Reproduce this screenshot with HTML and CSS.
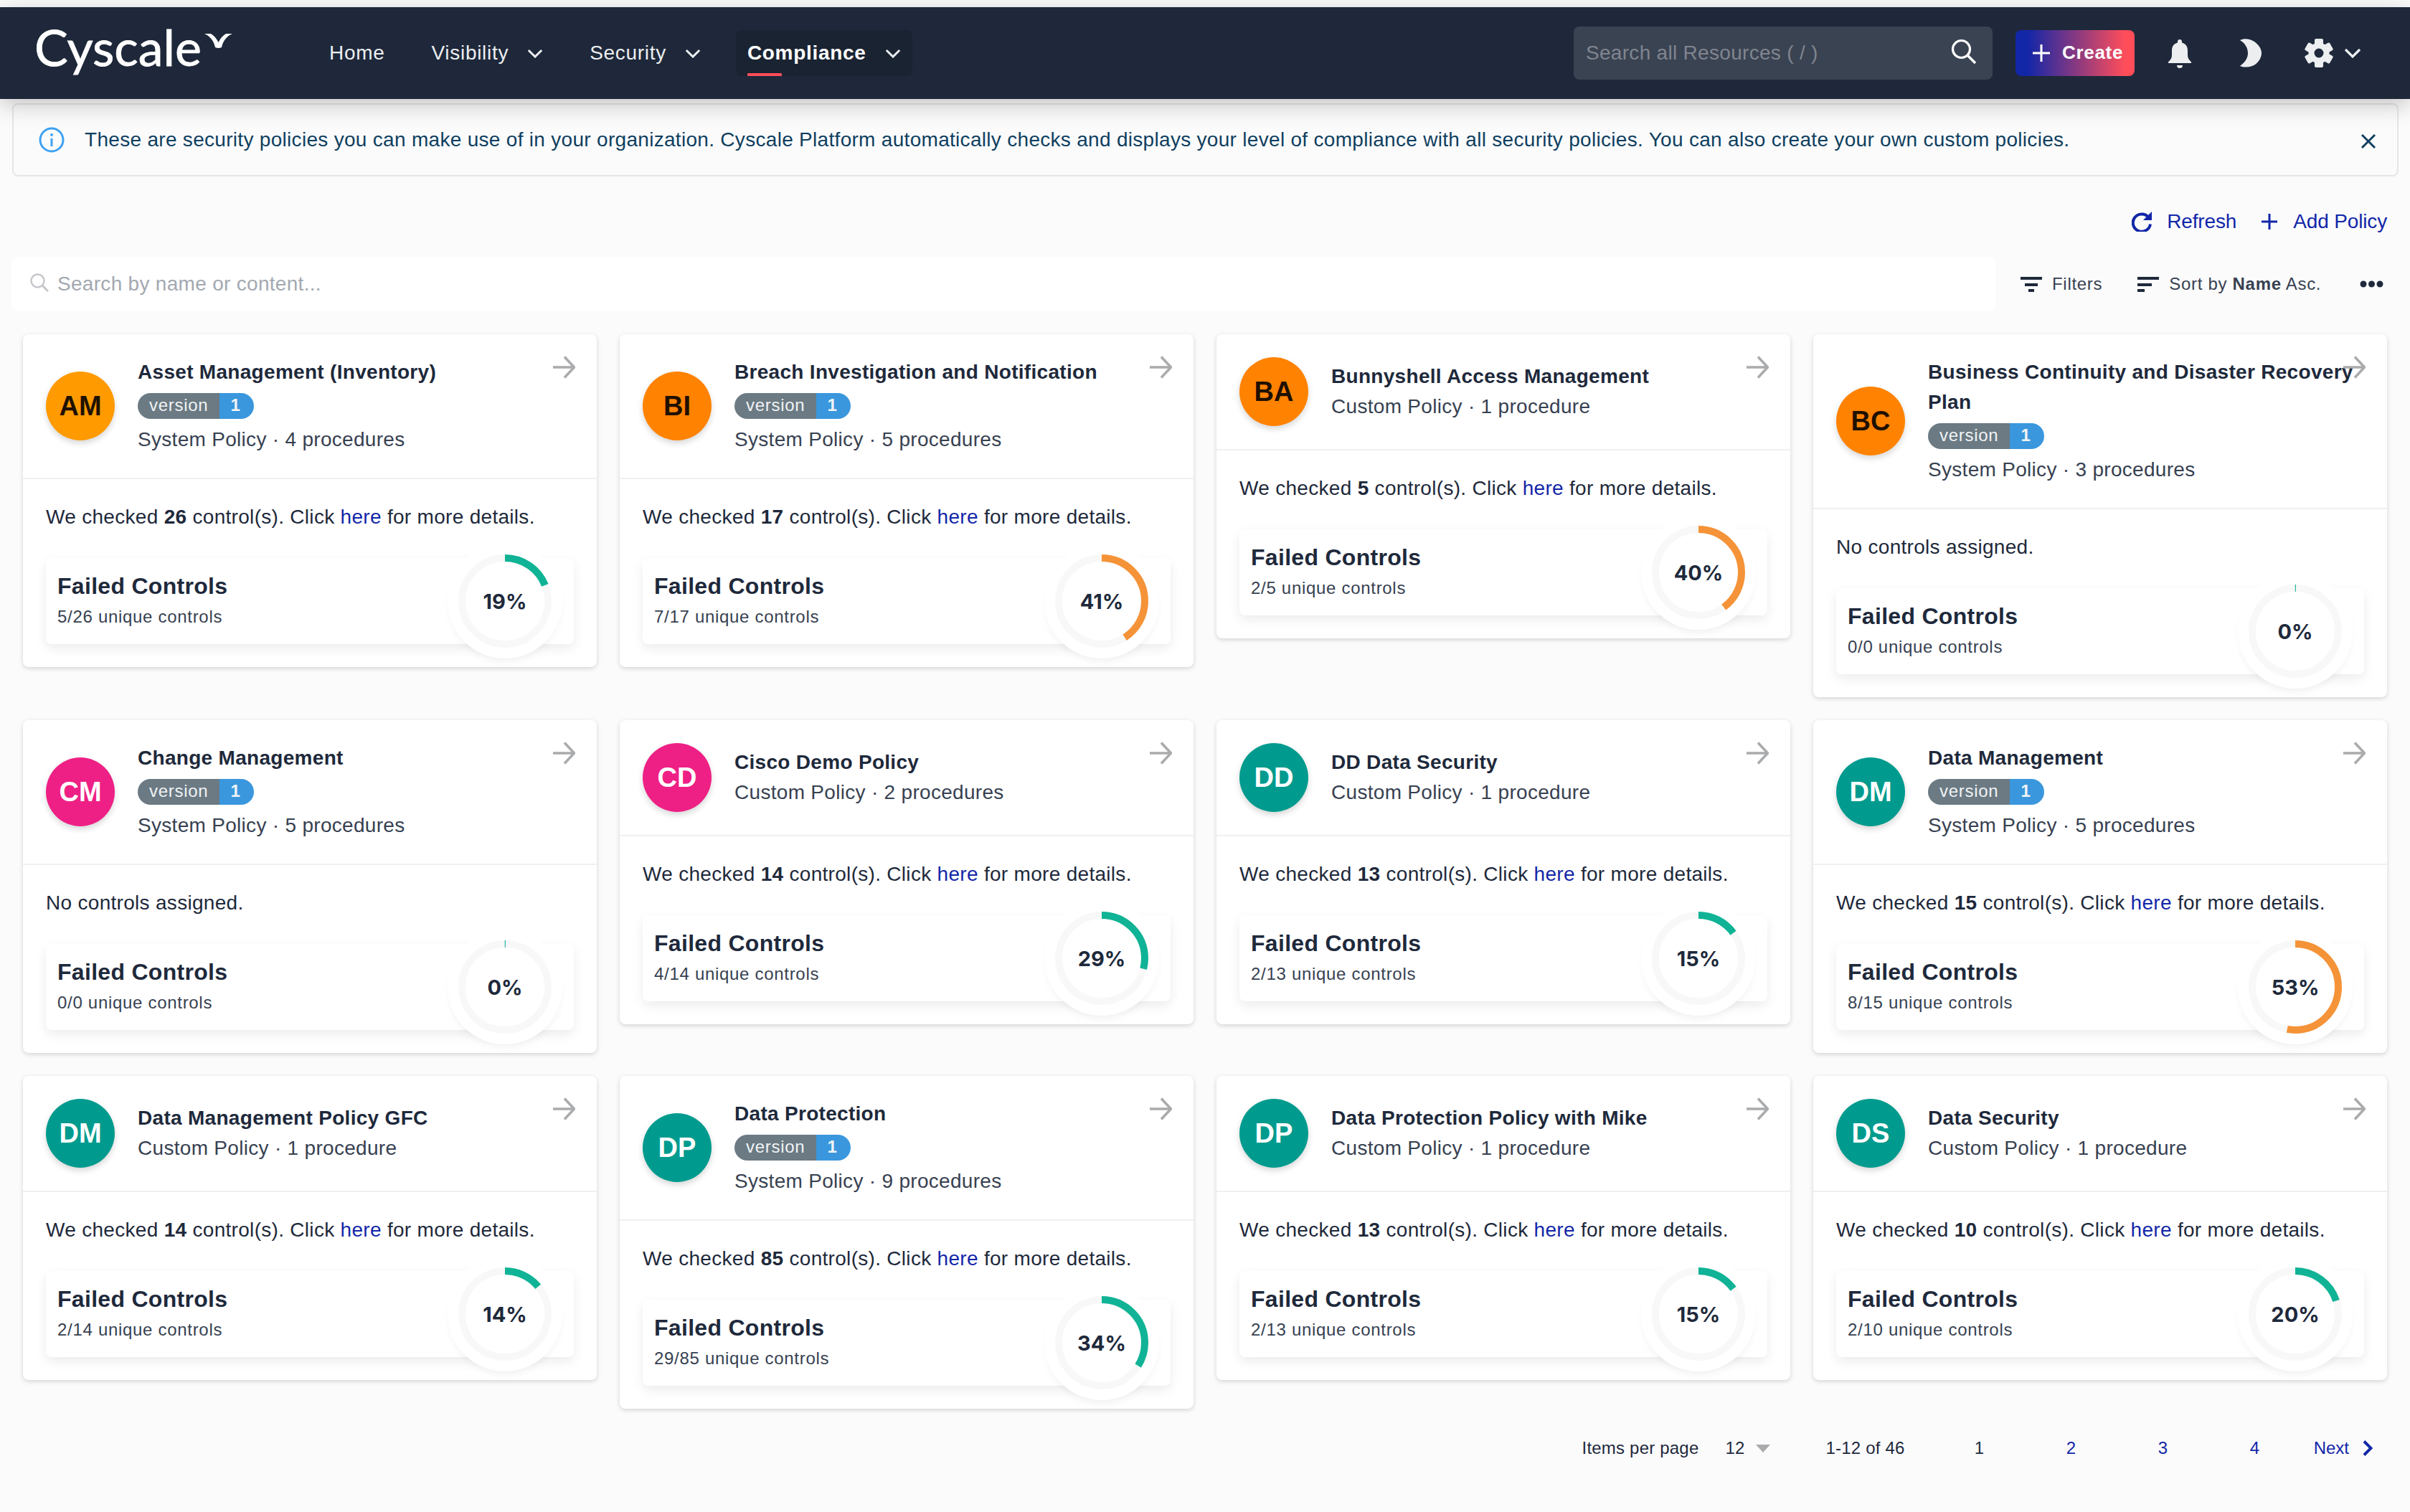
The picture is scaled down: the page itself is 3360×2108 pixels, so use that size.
FILE: index.html
```html
<!DOCTYPE html>
<html lang="en">
<head>
<meta charset="utf-8">
<title>Cyscale - Policies</title>
<link rel="stylesheet" href="styles.css">
</head>
<body>
<svg class="defs" width="0" height="0" aria-hidden="true">
  <symbol id="arrow" viewBox="0 0 32 32"><path d="M1 16H30M17 1.500L30.500 16L17 30.500" fill="none" stroke="currentColor" stroke-width="3.600"/></symbol>
  <symbol id="chev" viewBox="0 0 24 14"><path d="M2 2L12 12L22 2" fill="none" stroke="currentColor" stroke-width="3.200"/></symbol>
</svg>
<header class="nav">
  <div class="logo"><span class="logo-text">Cyscale</span><svg class="logo-mark" viewBox="0 0 39 20"><path d="M0 0H9C14 3 17 7 19.500 12C22 7 25 3 30 0H39C32 3 26 9 24 19Q19.500 21 15 19C13 9 7 3 0 0Z" fill="#fff"/></svg></div>
  <nav class="menu">
    <a class="menu-item">Home</a>
    <a class="menu-item">Visibility<svg class="menu-chev"><use href="#chev"/></svg></a>
    <a class="menu-item">Security<svg class="menu-chev"><use href="#chev"/></svg></a>
    <a class="menu-item active">Compliance<svg class="menu-chev"><use href="#chev"/></svg><i class="underline"></i></a>
  </nav>
  <div class="nav-right">
    <div class="global-search"><span>Search all Resources ( / )</span><svg class="gs-icon" viewBox="0 0 36 36"><circle cx="14.500" cy="14.500" r="12" fill="none" stroke="#fff" stroke-width="3.200"/><path d="M23 23L34 34" stroke="#fff" stroke-width="3.600"/></svg></div>
    <a class="create"><svg class="create-plus" viewBox="0 0 24 24"><path d="M12 0V24M0 12H24" stroke="#fff" stroke-width="3"/></svg>Create</a>
    <svg class="bell" viewBox="0 0 32 40"><path d="M16 0a3 3 0 0 1 3 3v1.500c6 1.500 8 6 8 11.500v6c0 4 2 6.500 5 9.500v1.500H0v-1.500c3-3 5-5.500 5-9.500v-6c0-5.500 2-10 8-11.500V3a3 3 0 0 1 3-3zM12 36h8a4 4 0 0 1-8 0z" fill="#eceef0"/></svg>
    <svg class="moon" viewBox="0 0 30 40"><path d="M0 2C6-1 14 0 20 4C27 9 30 15 30 20C30 27 25 35 17 38C11 40 5 40 0 38C7 33 11 27 11 20C11 13 7 6 0 2Z" fill="#eceef0"/></svg>
    <svg class="gear" viewBox="0 0 40 40"><g fill="#eceef0"><rect x="14" y="0" width="12" height="9" rx="2"/><rect x="14" y="0" width="12" height="9" rx="2" transform="rotate(60 20 20)"/><rect x="14" y="0" width="12" height="9" rx="2" transform="rotate(120 20 20)"/><rect x="14" y="0" width="12" height="9" rx="2" transform="rotate(180 20 20)"/><rect x="14" y="0" width="12" height="9" rx="2" transform="rotate(240 20 20)"/><rect x="14" y="0" width="12" height="9" rx="2" transform="rotate(300 20 20)"/></g><circle cx="20" cy="20" r="10.500" fill="none" stroke="#eceef0" stroke-width="8"/></svg>
    <svg class="gear-chev"><use href="#chev"/></svg>
  </div>
</header>

<div class="alert">
  <svg class="alert-icon" viewBox="0 0 36 36"><circle cx="18" cy="18" r="16" fill="none" stroke="#3fa2f2" stroke-width="3"/><circle cx="18" cy="11" r="2" fill="#3fa2f2"/><path d="M18 16V27" stroke="#3fa2f2" stroke-width="3"/></svg>
  <p class="alert-text">These are security policies you can make use of in your organization. Cyscale Platform automatically checks and displays your level of compliance with all security policies. You can also create your own custom policies.</p>
  <svg class="alert-close" viewBox="0 0 22 22"><path d="M2 2L20 20M20 2L2 20" stroke="#0f3f5f" stroke-width="3"/></svg>
</div>

<main class="main">
  <div class="actions">
    <a class="action"><svg class="action-icon" viewBox="0 0 28 28"><path d="M23.500 8A12.200 12.200 0 1 0 26 17.500" fill="none" stroke="#1226a8" stroke-width="4"/><path d="M28 0V12H16Z" fill="#1226a8"/></svg>Refresh</a>
    <a class="action"><svg class="action-icon plus" viewBox="0 0 24 24"><path d="M12 1V23M1 12H23" stroke="#1226a8" stroke-width="3"/></svg>Add Policy</a>
  </div>

  <div class="toolbar">
    <div class="search"><svg class="search-icon" viewBox="0 0 26 26"><circle cx="10.500" cy="10.500" r="9" fill="none" stroke="#c4c6ca" stroke-width="2.400"/><path d="M17 17L25 25" stroke="#c4c6ca" stroke-width="3"/></svg><span>Search by name or content...</span></div>
    <a class="tool filters"><svg class="tool-icon" viewBox="0 0 30 21"><path d="M0 0H30V4H0ZM6 9H24V13H6ZM11 17H19V21H11Z" fill="#1e293b"/></svg>Filters</a>
    <a class="tool sort"><svg class="tool-icon" viewBox="0 0 30 21"><path d="M0 0H30V4H0ZM0 9H20V13H0ZM0 17H10V21H0Z" fill="#1e293b"/></svg><span>Sort by <b>Name</b> Asc.</span></a>
    <svg class="more" viewBox="0 0 33 10"><circle cx="5" cy="5" r="4.500" fill="#1e293b"/><circle cx="16.500" cy="5" r="4.500" fill="#1e293b"/><circle cx="28" cy="5" r="4.500" fill="#1e293b"/></svg>
  </div>

  <section class="grid">

    <article class="card">
      <svg class="card-arrow"><use href="#arrow"/></svg>
      <div class="card-head">
        <div class="avatar amber">AM</div>
        <div class="head-text">
          <h3 class="title">Asset Management (Inventory)</h3>
          <div class="badge"><span class="badge-l">version</span><span class="badge-r">1</span></div>
          <div class="sub">System Policy · 4 procedures</div>
        </div>
      </div>
      <div class="card-body">
        <p class="checked">We checked <b>26</b> control(s). Click <a>here</a> for more details.</p>
        <div class="box">
          <div class="box-title">Failed Controls</div>
          <div class="box-sub">5/26 unique controls</div>
          <div class="ring"><svg class="ring-svg" viewBox="0 0 160 160"><circle class="track" cx="80" cy="80" r="60"/><circle class="val teal" cx="80" cy="80" r="60" pathLength="100" stroke-dasharray="19 100" transform="rotate(-90 80 80)"/></svg><span class="pct">19%</span></div>
        </div>
      </div>
    </article>

    <article class="card">
      <svg class="card-arrow"><use href="#arrow"/></svg>
      <div class="card-head">
        <div class="avatar orange">BI</div>
        <div class="head-text">
          <h3 class="title">Breach Investigation and Notification</h3>
          <div class="badge"><span class="badge-l">version</span><span class="badge-r">1</span></div>
          <div class="sub">System Policy · 5 procedures</div>
        </div>
      </div>
      <div class="card-body">
        <p class="checked">We checked <b>17</b> control(s). Click <a>here</a> for more details.</p>
        <div class="box">
          <div class="box-title">Failed Controls</div>
          <div class="box-sub">7/17 unique controls</div>
          <div class="ring"><svg class="ring-svg" viewBox="0 0 160 160"><circle class="track" cx="80" cy="80" r="60"/><circle class="val warn" cx="80" cy="80" r="60" pathLength="100" stroke-dasharray="41 100" transform="rotate(-90 80 80)"/></svg><span class="pct">41%</span></div>
        </div>
      </div>
    </article>

    <article class="card">
      <svg class="card-arrow"><use href="#arrow"/></svg>
      <div class="card-head">
        <div class="avatar orange">BA</div>
        <div class="head-text">
          <h3 class="title">Bunnyshell Access Management</h3>
          <div class="sub flat">Custom Policy · 1 procedure</div>
        </div>
      </div>
      <div class="card-body">
        <p class="checked">We checked <b>5</b> control(s). Click <a>here</a> for more details.</p>
        <div class="box">
          <div class="box-title">Failed Controls</div>
          <div class="box-sub">2/5 unique controls</div>
          <div class="ring"><svg class="ring-svg" viewBox="0 0 160 160"><circle class="track" cx="80" cy="80" r="60"/><circle class="val warn" cx="80" cy="80" r="60" pathLength="100" stroke-dasharray="40 100" transform="rotate(-90 80 80)"/></svg><span class="pct">40%</span></div>
        </div>
      </div>
    </article>

    <article class="card">
      <svg class="card-arrow"><use href="#arrow"/></svg>
      <div class="card-head">
        <div class="avatar orange">BC</div>
        <div class="head-text">
          <h3 class="title">Business Continuity and Disaster Recovery Plan</h3>
          <div class="badge"><span class="badge-l">version</span><span class="badge-r">1</span></div>
          <div class="sub">System Policy · 3 procedures</div>
        </div>
      </div>
      <div class="card-body">
        <p class="checked">No controls assigned.</p>
        <div class="box">
          <div class="box-title">Failed Controls</div>
          <div class="box-sub">0/0 unique controls</div>
          <div class="ring"><svg class="ring-svg" viewBox="0 0 160 160"><circle class="track" cx="80" cy="80" r="60"/><circle class="val teal" cx="80" cy="80" r="60" pathLength="100" stroke-dasharray="0.3 100" transform="rotate(-90.200 80 80)"/></svg><span class="pct">0%</span></div>
        </div>
      </div>
    </article>

    <article class="card">
      <svg class="card-arrow"><use href="#arrow"/></svg>
      <div class="card-head">
        <div class="avatar pink">CM</div>
        <div class="head-text">
          <h3 class="title">Change Management</h3>
          <div class="badge"><span class="badge-l">version</span><span class="badge-r">1</span></div>
          <div class="sub">System Policy · 5 procedures</div>
        </div>
      </div>
      <div class="card-body">
        <p class="checked">No controls assigned.</p>
        <div class="box">
          <div class="box-title">Failed Controls</div>
          <div class="box-sub">0/0 unique controls</div>
          <div class="ring"><svg class="ring-svg" viewBox="0 0 160 160"><circle class="track" cx="80" cy="80" r="60"/><circle class="val teal" cx="80" cy="80" r="60" pathLength="100" stroke-dasharray="0.3 100" transform="rotate(-90.200 80 80)"/></svg><span class="pct">0%</span></div>
        </div>
      </div>
    </article>

    <article class="card">
      <svg class="card-arrow"><use href="#arrow"/></svg>
      <div class="card-head">
        <div class="avatar pink">CD</div>
        <div class="head-text">
          <h3 class="title">Cisco Demo Policy</h3>
          <div class="sub flat">Custom Policy · 2 procedures</div>
        </div>
      </div>
      <div class="card-body">
        <p class="checked">We checked <b>14</b> control(s). Click <a>here</a> for more details.</p>
        <div class="box">
          <div class="box-title">Failed Controls</div>
          <div class="box-sub">4/14 unique controls</div>
          <div class="ring"><svg class="ring-svg" viewBox="0 0 160 160"><circle class="track" cx="80" cy="80" r="60"/><circle class="val teal" cx="80" cy="80" r="60" pathLength="100" stroke-dasharray="29 100" transform="rotate(-90 80 80)"/></svg><span class="pct">29%</span></div>
        </div>
      </div>
    </article>

    <article class="card">
      <svg class="card-arrow"><use href="#arrow"/></svg>
      <div class="card-head">
        <div class="avatar green">DD</div>
        <div class="head-text">
          <h3 class="title">DD Data Security</h3>
          <div class="sub flat">Custom Policy · 1 procedure</div>
        </div>
      </div>
      <div class="card-body">
        <p class="checked">We checked <b>13</b> control(s). Click <a>here</a> for more details.</p>
        <div class="box">
          <div class="box-title">Failed Controls</div>
          <div class="box-sub">2/13 unique controls</div>
          <div class="ring"><svg class="ring-svg" viewBox="0 0 160 160"><circle class="track" cx="80" cy="80" r="60"/><circle class="val teal" cx="80" cy="80" r="60" pathLength="100" stroke-dasharray="15 100" transform="rotate(-90 80 80)"/></svg><span class="pct">15%</span></div>
        </div>
      </div>
    </article>

    <article class="card">
      <svg class="card-arrow"><use href="#arrow"/></svg>
      <div class="card-head">
        <div class="avatar green">DM</div>
        <div class="head-text">
          <h3 class="title">Data Management</h3>
          <div class="badge"><span class="badge-l">version</span><span class="badge-r">1</span></div>
          <div class="sub">System Policy · 5 procedures</div>
        </div>
      </div>
      <div class="card-body">
        <p class="checked">We checked <b>15</b> control(s). Click <a>here</a> for more details.</p>
        <div class="box">
          <div class="box-title">Failed Controls</div>
          <div class="box-sub">8/15 unique controls</div>
          <div class="ring"><svg class="ring-svg" viewBox="0 0 160 160"><circle class="track" cx="80" cy="80" r="60"/><circle class="val warn" cx="80" cy="80" r="60" pathLength="100" stroke-dasharray="53 100" transform="rotate(-90 80 80)"/></svg><span class="pct">53%</span></div>
        </div>
      </div>
    </article>

    <article class="card">
      <svg class="card-arrow"><use href="#arrow"/></svg>
      <div class="card-head">
        <div class="avatar green">DM</div>
        <div class="head-text">
          <h3 class="title">Data Management Policy GFC</h3>
          <div class="sub flat">Custom Policy · 1 procedure</div>
        </div>
      </div>
      <div class="card-body">
        <p class="checked">We checked <b>14</b> control(s). Click <a>here</a> for more details.</p>
        <div class="box">
          <div class="box-title">Failed Controls</div>
          <div class="box-sub">2/14 unique controls</div>
          <div class="ring"><svg class="ring-svg" viewBox="0 0 160 160"><circle class="track" cx="80" cy="80" r="60"/><circle class="val teal" cx="80" cy="80" r="60" pathLength="100" stroke-dasharray="14 100" transform="rotate(-90 80 80)"/></svg><span class="pct">14%</span></div>
        </div>
      </div>
    </article>

    <article class="card">
      <svg class="card-arrow"><use href="#arrow"/></svg>
      <div class="card-head">
        <div class="avatar green">DP</div>
        <div class="head-text">
          <h3 class="title">Data Protection</h3>
          <div class="badge"><span class="badge-l">version</span><span class="badge-r">1</span></div>
          <div class="sub">System Policy · 9 procedures</div>
        </div>
      </div>
      <div class="card-body">
        <p class="checked">We checked <b>85</b> control(s). Click <a>here</a> for more details.</p>
        <div class="box">
          <div class="box-title">Failed Controls</div>
          <div class="box-sub">29/85 unique controls</div>
          <div class="ring"><svg class="ring-svg" viewBox="0 0 160 160"><circle class="track" cx="80" cy="80" r="60"/><circle class="val teal" cx="80" cy="80" r="60" pathLength="100" stroke-dasharray="34 100" transform="rotate(-90 80 80)"/></svg><span class="pct">34%</span></div>
        </div>
      </div>
    </article>

    <article class="card">
      <svg class="card-arrow"><use href="#arrow"/></svg>
      <div class="card-head">
        <div class="avatar green">DP</div>
        <div class="head-text">
          <h3 class="title">Data Protection Policy with Mike</h3>
          <div class="sub flat">Custom Policy · 1 procedure</div>
        </div>
      </div>
      <div class="card-body">
        <p class="checked">We checked <b>13</b> control(s). Click <a>here</a> for more details.</p>
        <div class="box">
          <div class="box-title">Failed Controls</div>
          <div class="box-sub">2/13 unique controls</div>
          <div class="ring"><svg class="ring-svg" viewBox="0 0 160 160"><circle class="track" cx="80" cy="80" r="60"/><circle class="val teal" cx="80" cy="80" r="60" pathLength="100" stroke-dasharray="15 100" transform="rotate(-90 80 80)"/></svg><span class="pct">15%</span></div>
        </div>
      </div>
    </article>

    <article class="card">
      <svg class="card-arrow"><use href="#arrow"/></svg>
      <div class="card-head">
        <div class="avatar green">DS</div>
        <div class="head-text">
          <h3 class="title">Data Security</h3>
          <div class="sub flat">Custom Policy · 1 procedure</div>
        </div>
      </div>
      <div class="card-body">
        <p class="checked">We checked <b>10</b> control(s). Click <a>here</a> for more details.</p>
        <div class="box">
          <div class="box-title">Failed Controls</div>
          <div class="box-sub">2/10 unique controls</div>
          <div class="ring"><svg class="ring-svg" viewBox="0 0 160 160"><circle class="track" cx="80" cy="80" r="60"/><circle class="val teal" cx="80" cy="80" r="60" pathLength="100" stroke-dasharray="20 100" transform="rotate(-90 80 80)"/></svg><span class="pct">20%</span></div>
        </div>
      </div>
    </article>

  </section>

  <footer class="pager">
    <span class="per-page">Items per page</span>
    <span class="per-value">12</span>
    <i class="per-caret"></i>
    <span class="range">1-12 of 46</span>
    <span class="page">1</span>
    <a class="page link">2</a>
    <a class="page link">3</a>
    <a class="page link">4</a>
    <a class="next">Next<svg class="next-chev" viewBox="0 0 14 22"><path d="M2 1.500L11.500 11L2 20.500" fill="none" stroke="#1226a8" stroke-width="4"/></svg></a>
  </footer>
</main>
</body>
</html>
```

FILE: styles.css
```css
* { box-sizing: border-box; }
html, body { margin: 0; padding: 0; }
body {
  background: #fbfbfc;
  color: #1e293b;
  font-family: "Liberation Sans", Arial, sans-serif;
  font-size: 28px;
  letter-spacing: 0.3px;
  min-height: 2108px;
  padding-top: 10px;
}
.defs { position: absolute; }
h3, p { margin: 0; }

/* top bar */
.nav {
  position: relative;
  z-index: 2;
  height: 128px;
  background: #1e283a;
  display: flex;
  align-items: center;
  padding: 0 68px 0 48px;
  box-shadow: 0 8px 30px rgba(0, 0, 0, 0.22);
  color: #eceef0;
}
.logo { display: flex; align-items: flex-start; align-self: flex-start; margin-top: 20px; width: 380px; color: #fff; }
.logo-text { font-family: "Lato", sans-serif; font-size: 70px; line-height: 70px; letter-spacing: 0; -webkit-text-stroke: 0.8px #fff; }
.logo-mark { width: 39px; height: 20px; margin-top: 17px; margin-left: 4px; }
.menu { display: flex; gap: 33px; margin-left: 15px; }
.menu-item {
  position: relative;
  height: 64px;
  padding: 0 16px;
  display: flex;
  align-items: center;
  gap: 26px;
  border-radius: 8px;
  letter-spacing: 0.7px;
}
.menu-chev { width: 22px; height: 13px; color: #eceef0; }
.active { background: #1a2331; font-weight: 700; color: #fff; }
.underline {
  position: absolute;
  left: 16px;
  bottom: 0;
  width: 48px;
  height: 4px;
  background: #ff4d5a;
  border-radius: 1px;
}
.nav-right { margin-left: auto; display: flex; align-items: center; }
.global-search {
  width: 584px;
  height: 74px;
  background: #3a4352;
  border-radius: 8px;
  display: flex;
  align-items: center;
  justify-content: space-between;
  padding: 0 22px 0 17px;
  color: #80858f;
}
.gs-icon { width: 36px; height: 36px; margin-top: -4px; }
.create {
  margin-left: 32px;
  width: 166px;
  height: 64px;
  border-radius: 8px;
  background: linear-gradient(90deg, #1226a8 10%, #ff4d5a 92%);
  color: #fff;
  font-weight: 700;
  font-size: 26px;
  letter-spacing: 0.7px;
  display: flex;
  align-items: center;
  padding: 0 0 2px 24px;
  gap: 17px;
}
.create-plus { width: 24px; height: 24px; margin-top: 2px; }
.bell { width: 32px; height: 40px; margin-left: 47px; margin-top: 2px; }
.moon { width: 30px; height: 40px; margin-left: 68px; }
.gear { width: 40px; height: 40px; margin-left: 60px; }
.gear-chev { width: 24px; height: 14px; margin-left: 15px; color: #eceef0; }

/* info alert */
.alert {
  margin: 6px 16px 0 17px;
  height: 102px;
  border: 2px solid #e6e6e8;
  border-radius: 8px;
  display: flex;
  align-items: center;
  padding: 0 29px 0 35px;
  color: #0f3f5f;
}
.alert-icon { width: 36px; height: 36px; flex: none; }
.alert-text { margin-left: 28px; flex: 1; }
.alert-close { width: 22px; height: 22px; flex: none; margin-top: 4px; }

/* main */
.main { display: block; }
.actions {
  margin-top: 42px;
  height: 42px;
  padding-right: 32px;
  display: flex;
  justify-content: flex-end;
  align-items: center;
  gap: 34px;
  color: #1226a8;
  letter-spacing: -0.15px;
}
.action { display: flex; align-items: center; gap: 21px; }
.action-icon { width: 28px; height: 28px; }
.action-icon.plus { width: 24px; height: 24px; }

.toolbar {
  margin-top: 28px;
  padding-left: 16px;
  display: flex;
  align-items: center;
  font-size: 24px;
  letter-spacing: 0.7px;
  color: #374151;
}
.search {
  width: 2766px;
  height: 76px;
  background: #fff;
  border-radius: 8px;
  display: flex;
  align-items: center;
  padding-left: 26px;
  gap: 12px;
  font-size: 28px;
  letter-spacing: 0.3px;
  color: #a3a8b0;
}
.search-icon { width: 26px; height: 26px; margin-top: -4px; }
.tool { display: flex; align-items: center; gap: 14px; }
.tool-icon { width: 30px; height: 21px; }
.filters { margin-left: 35px; }
.sort { margin-left: 49px; }
.more { width: 33px; height: 10px; margin-left: 54px; }

/* cards */
.grid {
  margin-top: 32px;
  padding: 0 32px;
  display: grid;
  grid-template-columns: repeat(4, 800px);
  gap: 32px;
  align-items: start;
}
.card {
  position: relative;
  background: #fff;
  border-radius: 8px;
  box-shadow: 0 2px 6px rgba(0, 0, 0, 0.16);
}
.card-arrow { position: absolute; top: 30px; right: 30px; width: 32px; height: 32px; color: #aaabad; }
.card-head {
  display: flex;
  align-items: center;
  gap: 32px;
  padding: 32px;
  border-bottom: 2px solid #f0f0f1;
}
.avatar {
  flex: none;
  width: 96px;
  height: 96px;
  border-radius: 50%;
  display: flex;
  align-items: center;
  justify-content: center;
  font-size: 38px;
  font-weight: 700;
  letter-spacing: 0;
  box-shadow: 0 4px 8px rgba(0, 0, 0, 0.16);
}
.amber { background: #ff9a00; color: #1f1200; }
.orange { background: #ff8200; color: #1f1000; }
.pink { background: #ee2085; color: #fff; }
.green { background: #009b8e; color: #fff; }
.head-text { min-width: 0; }
.title { font-size: 28px; line-height: 42px; font-weight: 700; color: #1e293b; }
.badge {
  display: flex;
  width: 162px;
  height: 36px;
  margin: 8px 0;
  border-radius: 18px;
  overflow: hidden;
  font-size: 24px;
  line-height: 34px;
  letter-spacing: 0.7px;
  color: #f1f3f5;
}
.badge-l { width: 114px; background: #6b7a83; padding-left: 16px; }
.badge-r { width: 48px; background: #3a97dd; text-align: center; font-weight: 700; padding-right: 3px; }
.sub { line-height: 42px; color: #374151; }
.card-body { padding: 32px; }
.checked { line-height: 42px; }
.checked b { font-weight: 700; }
.checked a { color: #1226a8; }
.box {
  position: relative;
  margin-top: 36px;
  height: 120px;
  padding: 17px 16px 16px;
  border-radius: 8px;
  background: #fff;
  box-shadow: 0 6px 16px rgba(0, 0, 0, 0.08);
}
.box-title { font-size: 32px; line-height: 44px; font-weight: 700; }
.box-sub { margin-top: 3px; font-size: 24px; line-height: 36px; letter-spacing: 0.7px; color: #374151; }
.ring {
  position: absolute;
  top: -20px;
  right: 16px;
  width: 160px;
  height: 160px;
  border-radius: 50%;
  background: #fff;
  box-shadow: 0 8px 14px -6px rgba(0, 0, 0, 0.08);
  display: flex;
  align-items: center;
  justify-content: center;
}
.ring-svg { position: absolute; inset: 0; width: 160px; height: 160px; }
.track { fill: none; stroke: #f8f8f8; stroke-width: 10; }
.val { fill: none; stroke-width: 10; }
.teal { stroke: #10b395; }
.warn { stroke: #f59338; }
.pct { position: relative; font-family: "Inter", sans-serif; font-size: 29px; font-weight: 700; letter-spacing: 0; }

/* pager */
.pager {
  margin-top: 37px;
  height: 36px;
  padding-right: 52px;
  display: flex;
  justify-content: flex-end;
  align-items: center;
  font-size: 24px;
  letter-spacing: 0.2px;
}
.per-value { margin-left: 37px; }
.per-caret {
  margin-left: 15px;
  width: 0;
  height: 0;
  border-left: 10px solid transparent;
  border-right: 10px solid transparent;
  border-top: 11px solid #aaabad;
}
.range { margin-left: 78px; }
.page { width: 128px; text-align: center; }
.range + .page { margin-left: 40px; }
.link { color: #1226a8; }
.next { margin-left: 18px; display: flex; align-items: center; gap: 19px; color: #1226a8; letter-spacing: 0; }
.next-chev { width: 14px; height: 22px; }
```
